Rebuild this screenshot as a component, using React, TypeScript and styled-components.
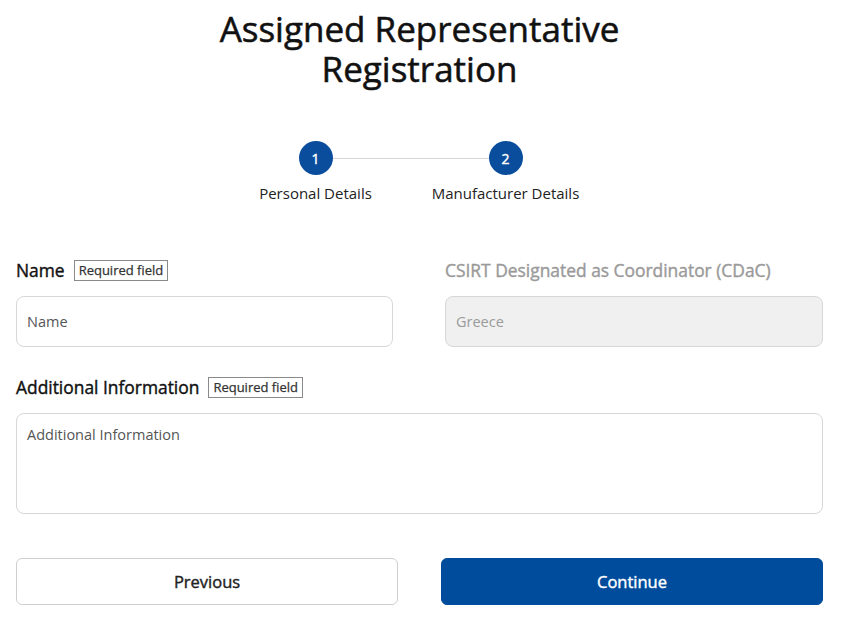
import React from "react";
import styled, { createGlobalStyle } from "styled-components";

const GlobalStyle = createGlobalStyle`
  body {
    margin: 0;
    background: #ffffff;
    font-family: "Open Sans", "Noto Sans", sans-serif;
    color: #1a1a1a;
  }
`;

const Page = styled.div`
  padding: 9px 24px 0 16px;
`;

// Open Sans here has no semibold cut, so a thin stroke thickens the regular face
const Title = styled.h1`
  margin: 0 auto;
  width: 470px;
  text-align: center;
  font-size: 35px;
  font-weight: 400;
  -webkit-text-stroke: 0.55px #111;
  line-height: 40px;
  color: #111;
`;

const Stepper = styled.div`
  display: flex;
  justify-content: center;
  margin: 52px 0 0 -18px;
`;

const Step = styled.div`
  position: relative;
  width: 190px;
  display: flex;
  flex-direction: column;
  align-items: center;
`;

const Connector = styled.div`
  position: absolute;
  top: 17px;
  left: 50%;
  width: 190px;
  height: 1px;
  background: #d6d6d6;
`;

const Circle = styled.div`
  position: relative;
  z-index: 1;
  width: 34px;
  height: 34px;
  border-radius: 50%;
  background: #0a4d9c;
  color: #fff;
  font-size: 14px;
  font-weight: 400;
  -webkit-text-stroke: 0.4px #fff;
  display: flex;
  align-items: center;
  justify-content: center;
`;

const StepLabel = styled.span`
  margin-top: 8px;
  font-size: 15px;
  color: #222;
`;

const FieldGrid = styled.div`
  display: grid;
  grid-template-columns: 377px 1fr;
  column-gap: 52px;
  margin-top: 56px;
`;

const Field = styled.div<{ $full?: boolean }>`
  grid-column: ${(p) => (p.$full ? "1 / -1" : "auto")};
  display: flex;
  flex-direction: column;
  margin-bottom: 29px;
`;

const LabelRow = styled.div`
  display: flex;
  align-items: center;
  gap: 9px;
  height: 22px;
  margin-bottom: 15px;
`;

const Label = styled.label<{ $muted?: boolean }>`
  font-size: 17.4px;
  font-weight: 400;
  color: ${(p) => (p.$muted ? "#9a9a9a" : "#111")};
  -webkit-text-stroke: 0.4px ${(p) => (p.$muted ? "#9a9a9a" : "#111")};
`;

const Badge = styled.span`
  border: 1px solid #8a8a8a;
  padding: 1px 4px;
  font-size: 13px;
  font-weight: 400;
  -webkit-text-stroke: 0.25px #333;
  line-height: 17px;
  color: #333;
`;

const Input = styled.input<{ $disabled?: boolean }>`
  box-sizing: border-box;
  height: 51px;
  padding: 0 10px;
  border: 1px solid #d7d7d7;
  border-radius: 8px;
  background: ${(p) => (p.$disabled ? "#f0f0f0" : "#fff")};
  font-family: inherit;
  font-size: 14.5px;
  color: #333;
  outline: none;
  &::placeholder {
    color: ${(p) => (p.$disabled ? "#9a9a9a" : "#555")};
  }
`;

const TextArea = styled.textarea`
  box-sizing: border-box;
  height: 101px;
  padding: 11px 10px;
  border: 1px solid #d7d7d7;
  border-radius: 8px;
  resize: none;
  font-family: inherit;
  font-size: 14.5px;
  outline: none;
  &::placeholder {
    color: #555;
  }
`;

const Actions = styled.div`
  display: grid;
  grid-template-columns: 382px 1fr;
  column-gap: 43px;
  margin-top: 15px;
`;

const Button = styled.button<{ $primary?: boolean }>`
  height: 47px;
  border-radius: 6px;
  border: 1px solid ${(p) => (p.$primary ? "#004c9c" : "#cfcfcf")};
  background: ${(p) => (p.$primary ? "#004c9c" : "#fff")};
  color: ${(p) => (p.$primary ? "#fff" : "#222")};
  -webkit-text-stroke: 0.4px ${(p) => (p.$primary ? "#fff" : "#222")};
  font-family: inherit;
  font-size: 16.5px;
  font-weight: 400;
  cursor: pointer;
`;

const steps = ["Personal Details", "Manufacturer Details"];

export default function App() {
  return (
    <Page>
      <GlobalStyle />
      <Title>Assigned Representative Registration</Title>
      <Stepper>
        {steps.map((s, i) => (
          <Step key={s}>
            {i < steps.length - 1 && <Connector />}
            <Circle>{i + 1}</Circle>
            <StepLabel>{s}</StepLabel>
          </Step>
        ))}
      </Stepper>
      <FieldGrid>
        <Field>
          <LabelRow>
            <Label>Name</Label>
            <Badge>Required field</Badge>
          </LabelRow>
          <Input placeholder="Name" />
        </Field>
        <Field>
          <LabelRow>
            <Label $muted>CSIRT Designated as Coordinator (CDaC)</Label>
          </LabelRow>
          <Input $disabled disabled placeholder="Greece" />
        </Field>
        <Field $full>
          <LabelRow>
            <Label>Additional Information</Label>
            <Badge>Required field</Badge>
          </LabelRow>
          <TextArea placeholder="Additional Information" />
        </Field>
      </FieldGrid>
      <Actions>
        <Button>Previous</Button>
        <Button $primary>Continue</Button>
      </Actions>
    </Page>
  );
}
